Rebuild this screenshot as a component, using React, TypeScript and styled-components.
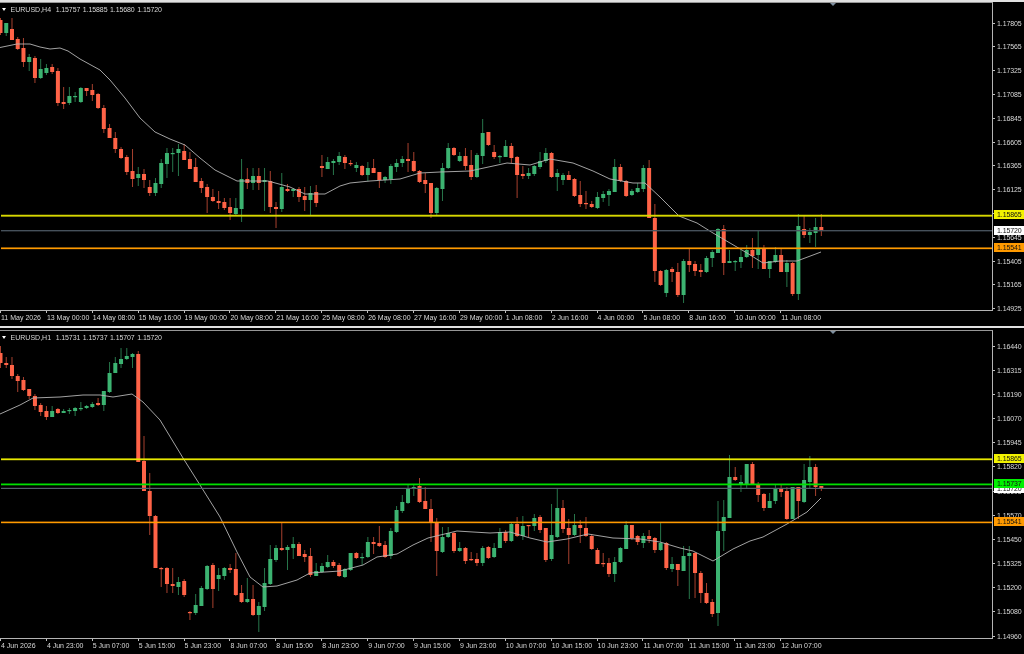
import React from 'react';
import styled, { createGlobalStyle } from 'styled-components';

type Candle = [number, number, number, number, number]; // high, bodyTop, bodyBottom, low, 1 = bull
type Point = [number, number];
type Tag = { y: number; label: string; bg: string };

const STEP = 5.74;
const RED = '#ff6347';
const GREEN = '#3cb371';

const H4_CANDLES: Candle[] = [
  [18,20,33,35,0],[23,23,33,36,1],[18,29,40,40,0],[37,39,49,50,0],[38,48,62,67,0],[54,57,62,71,1],[56,58,78,83,0],[59,69,78,79,1],
  [64,68,73,75,1],[64,67,72,74,0],[68,71,103,106,0],[87,102,104,109,0],[87,96,103,105,1],[92,96,97,102,1],[87,88,102,103,1],[88,88,91,96,0],
  [84,90,95,101,0],[93,94,108,109,0],[105,108,129,133,0],[124,128,138,138,0],[132,138,149,153,0],[147,149,158,159,0],[155,157,172,175,0],[149,171,179,187,0],
  [167,174,178,186,1],[169,174,180,188,0],[180,187,193,196,0],[178,183,193,196,1],[159,163,184,188,1],[148,153,164,178,1],[148,153,154,172,1],[144,149,153,176,1],
  [144,151,160,160,0],[152,159,169,169,0],[158,167,182,182,0],[178,181,188,193,0],[184,187,197,213,0],[189,197,201,202,0],[191,201,203,209,0],[198,202,208,210,0],
  [198,207,213,220,0],[198,208,214,215,1],[159,179,209,222,1],[168,179,183,189,0],[168,176,183,190,1],[168,176,183,190,0],[168,180,182,211,1],[171,181,207,213,0],
  [202,207,209,228,0],[173,187,209,212,1],[184,189,191,192,0],[188,189,191,197,1],[187,189,197,202,0],[187,196,200,211,0],[186,193,200,215,1],[185,192,203,207,0],
  [155,166,168,177,0],[157,162,169,169,1],[159,161,163,175,1],[152,156,162,165,1],[155,157,163,169,0],[160,163,164,166,0],[162,165,168,172,1],[165,166,175,176,0],
  [162,168,175,181,1],[159,168,173,173,0],[172,172,180,188,0],[176,177,180,183,1],[164,166,179,184,1],[159,163,167,172,1],[156,159,163,167,1],[143,159,161,172,0],
  [152,161,171,172,0],[170,171,182,183,0],[173,180,184,193,0],[183,183,213,218,0],[187,188,213,215,1],[163,168,189,201,1],[143,148,168,169,1],[147,148,155,156,0],
  [152,156,161,162,1],[148,156,166,170,0],[150,165,177,180,0],[153,155,177,178,1],[119,133,156,164,1],[132,132,145,146,0],[145,152,157,159,0],[155,156,157,163,1],
  [140,146,157,157,1],[143,146,158,163,0],[156,157,175,198,0],[166,174,176,179,0],[168,173,176,179,1],[165,166,174,176,1],[152,161,167,169,1],[148,153,161,163,1],
  [152,153,177,178,0],[169,173,177,191,1],[173,175,180,185,1],[171,175,180,180,0],[178,179,196,197,0],[181,195,204,207,0],[191,203,204,209,0],[201,204,207,208,0],
  [192,197,208,209,1],[191,194,198,202,1],[189,191,195,206,1],[159,167,192,192,1],[164,167,181,182,0],[180,181,196,197,0],[189,191,195,196,1],[183,188,192,193,1],
  [165,168,189,192,1],[160,168,218,218,0],[204,218,271,282,0],[270,271,285,286,0],[269,270,293,297,1],[267,269,272,282,0],[263,272,295,297,0],[259,261,295,303,1],
  [248,261,265,272,0],[261,264,271,276,0],[264,270,272,277,0],[256,258,272,273,1],[250,252,258,267,1],[228,229,253,253,1],[225,229,263,275,0],[250,261,263,263,1],
  [260,261,262,271,1],[250,257,262,268,1],[245,250,257,258,1],[238,250,256,268,0],[231,249,255,269,1],[245,248,269,269,0],[261,261,269,278,1],[247,255,262,263,1],
  [248,255,272,272,0],[260,263,272,287,1],[262,263,294,296,0],[214,226,294,300,1],[216,229,235,238,0],[228,232,235,243,1],[218,227,233,247,1],[214,227,231,236,0],
];

const H1_CANDLES: Candle[] = [
  [346,353,363,368,0],[357,363,365,368,0],[357,365,376,379,0],[374,376,381,392,0],[377,380,390,391,0],[389,389,396,399,0],[394,396,406,410,0],[403,405,412,416,0],
  [406,411,417,420,0],[406,411,417,417,1],[408,409,413,414,0],[409,411,413,413,1],[408,410,411,414,1],[407,408,411,416,1],[402,408,409,411,1],[405,406,408,409,1],
  [402,404,407,408,1],[398,403,405,406,0],[391,391,405,411,1],[362,373,392,393,1],[357,363,373,373,1],[348,359,364,368,1],[348,356,359,360,1],[353,354,357,368,1],
  [351,354,462,462,0],[436,461,491,491,0],[473,491,516,535,0],[515,516,568,568,0],[567,568,569,587,0],[567,568,584,593,0],[568,584,586,593,0],[577,582,587,595,1],
  [579,581,595,597,0],[611,612,613,620,0],[594,605,613,615,1],[586,588,606,606,1],[565,566,589,590,1],[563,565,589,608,0],[568,575,579,591,1],[567,568,576,580,1],
  [564,568,570,573,0],[553,569,595,596,0],[585,593,602,603,0],[578,599,602,603,1],[585,599,615,616,0],[602,606,615,632,1],[568,583,607,611,1],[545,559,584,585,1],
  [545,548,560,562,1],[522,548,550,551,0],[545,547,550,570,1],[537,544,548,559,1],[542,544,556,556,0],[550,554,557,562,0],[548,556,575,577,0],[563,571,576,576,1],
  [563,566,572,573,1],[555,562,567,568,1],[560,562,566,568,0],[563,565,576,577,0],[568,569,577,578,1],[553,553,570,571,1],[552,553,558,559,0],[553,557,558,565,1],
  [537,542,557,558,1],[537,542,544,554,0],[526,543,546,547,0],[541,545,557,558,0],[528,531,556,559,1],[506,510,532,533,1],[495,502,511,513,1],[485,489,503,504,1],
  [485,487,489,496,1],[478,486,502,503,0],[487,501,509,509,0],[499,509,522,542,0],[518,523,551,576,0],[527,537,552,553,1],[527,533,537,538,1],[532,533,551,553,0],
  [542,548,551,552,1],[547,548,561,564,0],[552,559,560,561,0],[553,559,563,566,0],[546,548,563,566,1],[546,547,558,559,0],[543,548,557,558,1],[528,532,548,548,1],
  [530,532,541,543,0],[522,524,541,542,1],[517,524,536,537,0],[516,526,536,540,1],[525,525,526,537,0],[514,518,526,531,1],[515,517,530,533,0],[528,528,560,562,0],
  [504,535,559,561,1],[488,508,537,538,1],[500,508,529,533,0],[519,528,535,564,0],[514,525,535,536,1],[520,525,528,543,0],[517,528,536,537,0],[534,536,549,550,0],
  [548,550,564,564,0],[553,563,564,567,0],[558,563,574,577,0],[557,562,574,582,1],[547,548,562,563,1],[521,525,549,549,1],[525,525,538,540,0],[535,536,542,545,0],
  [533,536,543,548,1],[530,536,539,543,0],[537,538,550,553,0],[523,543,550,551,1],[542,543,568,570,0],[557,564,569,572,1],[564,564,570,586,0],[546,556,571,571,1],
  [546,553,556,599,1],[552,553,573,598,0],[571,573,593,603,0],[583,593,603,604,0],[599,602,614,617,0],[501,531,613,626,1],[500,517,531,551,1],[455,477,518,518,1],
  [467,477,480,481,0],[475,482,484,492,1],[464,464,484,488,1],[462,464,484,484,0],[482,484,495,502,0],[493,494,508,511,0],[493,501,508,508,1],[485,489,501,504,1],
  [485,489,492,497,0],[487,491,519,520,0],[487,487,519,519,1],[487,487,501,519,0],[464,480,502,503,1],[456,467,482,488,1],[464,467,487,496,0],[486,486,489,491,0],
];

const H4_MA: Point[] = [
  [0,47.5],[17,44],[30,44],[40,47],[50,49],[60,48],[68,51],[80,59],[100,70],[110,80],[125,98],[140,118],[155,132],[170,139],[185,145],[200,158],
  [215,170],[237,181],[255,181],[268,181],[290,187],[305,194],[325,194],[340,186],[350,183],[370,181],[400,179],[420,173],[440,172],[470,171],[507,163],[530,165],
  [550,159],[573,163],[593,171],[610,179],[633,183],[645,183],[660,197],[679,216],[697,223],[713,233],[730,243],[747,253],[763,263],[780,261],[797,261],[821,252],
];

const H1_MA: Point[] = [
  [0,414],[20,405],[33,398],[60,397],[83,395],[100,395],[113,397],[132,394],[143,402],[160,420],[183,458],[200,485],[220,517],[237,552],[250,577],[263,587],
  [277,586],[297,580],[310,573],[340,571],[363,565],[377,557],[397,554],[413,545],[428,538],[457,531],[473,532],[490,533],[510,532],[530,538],[547,542],[567,539],
  [588,534],[613,538],[640,539],[660,542],[680,548],[693,551],[713,561],[733,549],[750,541],[763,537],[787,524],[807,512],[821,498],
];

const H4_TIMES = ['11 May 2026','13 May 00:00','14 May 08:00','15 May 16:00','19 May 00:00','20 May 08:00','21 May 16:00','25 May 08:00','26 May 08:00','27 May 16:00','29 May 00:00','1 Jun 08:00','2 Jun 16:00','4 Jun 00:00','5 Jun 08:00','8 Jun 16:00','10 Jun 00:00','11 Jun 08:00'];
const H1_TIMES = ['4 Jun 2026','4 Jun 23:00','5 Jun 07:00','5 Jun 15:00','5 Jun 23:00','8 Jun 07:00','8 Jun 15:00','8 Jun 23:00','9 Jun 07:00','9 Jun 15:00','9 Jun 23:00','10 Jun 07:00','10 Jun 15:00','10 Jun 23:00','11 Jun 07:00','11 Jun 15:00','11 Jun 23:00','12 Jun 07:00'];

const H4_PRICES = ['1.17805','1.17565','1.17325','1.17085','1.16845','1.16605','1.16365','1.16125','1.15885','1.15645','1.15405','1.15165','1.14925'];
const H1_PRICES = ['1.16440','1.16315','1.16190','1.16070','1.15945','1.15820','1.15695','1.15570','1.15450','1.15325','1.15200','1.15080','1.14960'];

const GlobalStyle = createGlobalStyle`
  html, body {
    margin: 0;
    padding: 0;
    background: #000;
  }
`;

const Terminal = styled.div`
  width: 1024px;
  height: 654px;
  display: flex;
  flex-direction: column;
  overflow: hidden;
  background: #000;
  color: #d8d8d8;
  font-family: "Liberation Sans", Arial, sans-serif;
  font-size: 7px;
  letter-spacing: -0.1px;
  filter: blur(0.4px);
`;

const ChartWindow = styled.section<{ $gap: number }>`
  height: ${(p) => p.$gap + 324}px;
  flex: none;
  display: flex;
  flex-direction: column;
  border-top: 2px solid #e0e0e0;
  padding-top: ${(p) => p.$gap}px;
`;

const ChartBody = styled.div`
  display: flex;
  height: 309px;
  flex: none;
`;

const PlotFrame = styled.div`
  position: relative;
  width: 992px;
  flex: none;
  border-right: 1px solid #b4b4b4;
  border-bottom: 1px solid #b4b4b4;
  border-top: 1px solid #969696;
  box-sizing: content-box;
  height: 307px;
`;

const PlotCanvas = styled.svg`
  display: block;
  width: 992px;
  height: 307px;
`;

const Legend = styled.div`
  position: absolute;
  top: 2px;
  left: 2px;
  display: flex;
  align-items: center;
  gap: 2.6px;
  line-height: 9px;
  white-space: nowrap;
`;

const LegendArrow = styled.span`
  width: 0;
  height: 0;
  margin-right: 2px;
  border-left: 2.5px solid transparent;
  border-right: 2.5px solid transparent;
  border-top: 3px solid #fff;
`;

const LegendSymbol = styled.span`
  margin-right: 2px;
  letter-spacing: 0;
`;

const ShiftMark = styled.span`
  position: absolute;
  top: 0;
  left: 830px;
  width: 0;
  height: 0;
  border-left: 3px solid transparent;
  border-right: 3px solid transparent;
  border-top: 3px solid #7f8f9f;
`;

const PriceAxis = styled.div`
  position: relative;
  flex: 1;
`;

const PriceTick = styled.span<{ $y: number }>`
  position: absolute;
  left: 4px;
  top: ${(p) => p.$y - 4.5}px;
  line-height: 9px;
  white-space: nowrap;

  &::before {
    content: '';
    position: absolute;
    left: -4px;
    top: 4px;
    width: 2px;
    height: 1px;
    background: #c0c0c0;
  }
`;

const PriceTag = styled.span<{ $y: number; $bg: string }>`
  position: absolute;
  left: 1px;
  right: 0;
  top: ${(p) => p.$y - 4.5}px;
  height: 9px;
  padding-left: 3px;
  line-height: 9px;
  color: #111;
  background: ${(p) => p.$bg};
`;

const TimeAxis = styled.div`
  display: flex;
  height: 14px;
  width: 993px;
  flex: none;
  align-items: center;
`;

const TimeCell = styled.span`
  position: relative;
  flex: 0 0 45.9px;
  padding-left: 1px;
  box-sizing: border-box;
  white-space: nowrap;
  line-height: 12px;
  letter-spacing: 0;

  &::before {
    content: '';
    position: absolute;
    left: 0;
    top: -1px;
    width: 1px;
    height: 2px;
    background: #c0c0c0;
  }
`;

function CandleMark({ index, candle }: { index: number; candle: Candle }) {
  const [high, top, bottom, low, bull] = candle;
  const x = 0.5 + STEP * index;
  const color = bull ? GREEN : RED;
  return (
    <g fill={color}>
      <rect x={x - 0.5} y={high} width={1} height={low - high} opacity={0.65} />
      <rect x={x - 2} y={top} width={4} height={Math.max(bottom - top, 1.2)} />
    </g>
  );
}

interface ChartProps {
  gap: number;
  originY: number;
  title: string;
  quote: string[];
  candles: Candle[];
  ma: Point[];
  lines: { y: number; color: string; width: number }[];
  prices: string[];
  firstPriceY: number;
  priceStep: number;
  tags: Tag[];
  times: string[];
}

function Chart({ gap, originY, title, quote, candles, ma, lines, prices, firstPriceY, priceStep, tags, times }: ChartProps) {
  return (
    <ChartWindow $gap={gap}>
      <ChartBody>
        <PlotFrame>
          <PlotCanvas viewBox={`0 ${originY} 992 307`}>
            {candles.map((c, i) => (
              <CandleMark key={i} index={i} candle={c} />
            ))}
            <polyline points={ma.map((p) => p.join(',')).join(' ')} fill="none" stroke="#b4b4b4" strokeWidth={0.9} />
            {lines.map((l) => (
              <rect key={l.y} x={1} y={l.y - l.width / 2} width={991} height={l.width} fill={l.color} />
            ))}
          </PlotCanvas>
          <Legend>
            <LegendArrow />
            <LegendSymbol>{title}</LegendSymbol>
            {quote.map((q) => (
              <span key={q}>{q}</span>
            ))}
          </Legend>
          <ShiftMark />
        </PlotFrame>
        <PriceAxis>
          {prices.map((p, i) => (
            <PriceTick key={p} $y={firstPriceY + priceStep * i - originY}>{p}</PriceTick>
          ))}
          {tags.map((t) => (
            <PriceTag key={t.label} $y={t.y - originY} $bg={t.bg}>{t.label}</PriceTag>
          ))}
        </PriceAxis>
      </ChartBody>
      <TimeAxis>
        {times.map((t) => (
          <TimeCell key={t}>{t}</TimeCell>
        ))}
      </TimeAxis>
    </ChartWindow>
  );
}

export default function App() {
  return (
    <>
      <GlobalStyle />
      <Terminal>
        <Chart
          gap={0}
          originY={3}
          title="EURUSD,H4"
          quote={['1.15757', '1.15885', '1.15680', '1.15720']}
          candles={H4_CANDLES}
          ma={H4_MA}
          lines={[
            { y: 215.7, color: '#d8d800', width: 1.9 },
            { y: 230.7, color: '#4a5560', width: 1.3 },
            { y: 248.3, color: '#ff9a00', width: 1.7 },
          ]}
          prices={H4_PRICES}
          firstPriceY={24}
          priceStep={23.8}
          tags={[
            { y: 215.7, label: '1.15865', bg: '#f2f200' },
            { y: 231, label: '1.15720', bg: '#fff' },
            { y: 248.3, label: '1.15541', bg: '#ff9a00' },
          ]}
          times={H4_TIMES}
        />
        <Chart
          gap={2}
          originY={331}
          title="EURUSD,H1"
          quote={['1.15731', '1.15737', '1.15707', '1.15720']}
          candles={H1_CANDLES}
          ma={H1_MA}
          lines={[
            { y: 459.3, color: '#e8e800', width: 1.8 },
            { y: 484.4, color: '#00e000', width: 1.8 },
            { y: 488.4, color: '#56616c', width: 1.2 },
            { y: 522.4, color: '#ff9a00', width: 1.6 },
          ]}
          prices={H1_PRICES}
          firstPriceY={347}
          priceStep={24.17}
          tags={[
            { y: 459.3, label: '1.15865', bg: '#f2f200' },
            { y: 489.5, label: '1.15720', bg: '#fff' },
            { y: 484.4, label: '1.15737', bg: '#00f000' },
            { y: 522.4, label: '1.15541', bg: '#ff9a00' },
          ]}
          times={H1_TIMES}
        />
      </Terminal>
    </>
  );
}
